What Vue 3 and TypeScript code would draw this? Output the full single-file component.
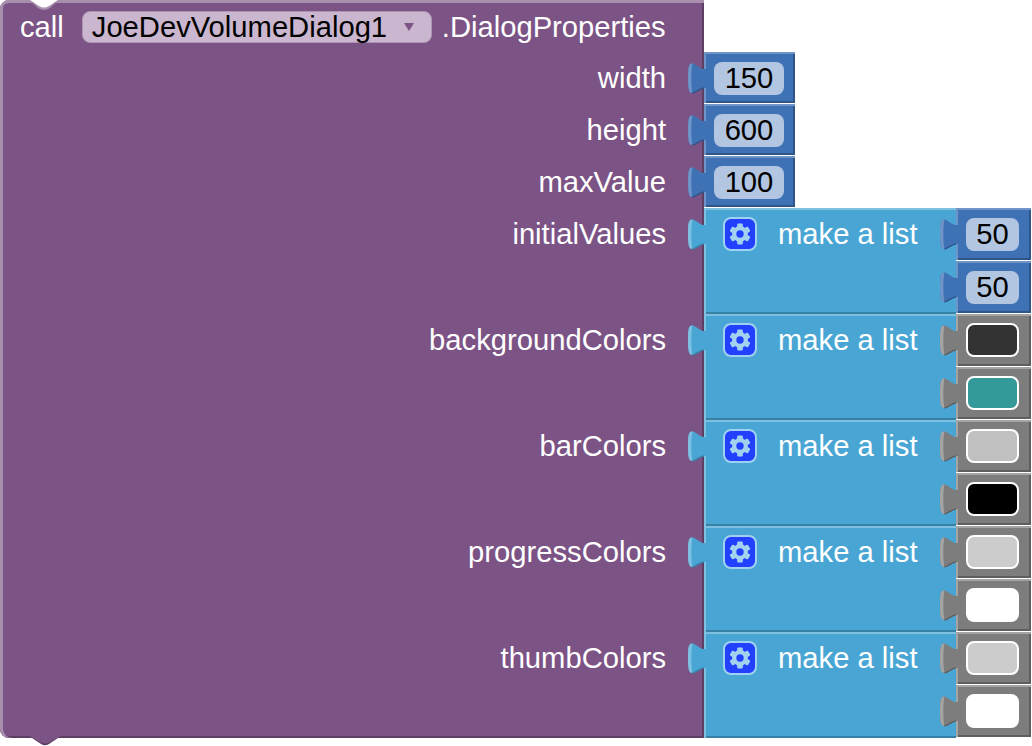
<script setup lang="ts">
type Item = { kind: 'num'; text: string } | { kind: 'color'; color: string; edge: boolean }
interface Row { label: string; kind: 'num' | 'list'; text?: string; items?: Item[] }

const n = (text: string): Item => ({ kind: 'num', text })
const c = (color: string, edge = true): Item => ({ kind: 'color', color, edge })

const rows: Row[] = [
  { label: 'width', kind: 'num', text: '150' },
  { label: 'height', kind: 'num', text: '600' },
  { label: 'maxValue', kind: 'num', text: '100' },
  { label: 'initialValues', kind: 'list', items: [n('50'), n('50')] },
  { label: 'backgroundColors', kind: 'list', items: [c('#333333'), c('#339999')] },
  { label: 'barColors', kind: 'list', items: [c('#c0c0c0'), c('#000000')] },
  { label: 'progressColors', kind: 'list', items: [c('#cccccc'), c('#ffffff', false)] },
  { label: 'thumbColors', kind: 'list', items: [c('#cccccc'), c('#ffffff', false)] },
]
const teeth = [0, 60, 120, 180, 240, 300]
</script>

<template>
  <div class="canvas">
    <svg class="notch" width="32" height="10" viewBox="0 0 32 10">
      <path d="M0 0 L9 8 Q15 12 21 8 L30 0 Z" fill="#a78fad" />
      <path d="M1 0 L10 6 Q15 9 20 6 L29 0 Z" fill="#ffffff" />
    </svg>
    <div class="head">
      <span class="word">call</span>
      <div class="field">
        <span>JoeDevVolumeDialog1</span>
        <i class="caret"></i>
      </div>
      <span class="word">.DialogProperties</span>
    </div>

    <div v-for="(row, r) in rows" :key="row.label" class="row">
      <div class="slot" :class="{ last: r === rows.length - 1 }">{{ row.label }}</div>

      <div v-if="row.kind === 'num'" class="value num wide">
        <svg class="tab" width="20" height="31" viewBox="0 0 20 31">
          <path class="t-fill" d="M20 6 L15 6 C11 5 8 1 4.5 .5 C.8 0 0 4 0 15 C0 26 .8 30 4.5 30 C9 29 12 25 16 25 L20 25 Z" />
          <path class="t-hi" d="M4.5 .5 C.8 0 0 4 0 15 C0 26 .8 30 4.5 30 C3 24 3 6 4.5 .5 Z" />
          <path class="t-lo" d="M4.5 30 C9 29 12 25 16 25" />
        </svg>
        <div class="pill">{{ row.text }}</div>
      </div>

      <div v-else class="list">
        <div class="list-body">
          <svg class="tab" width="20" height="31" viewBox="0 0 20 31">
            <path class="t-fill" d="M20 6 L15 6 C11 5 8 1 4.5 .5 C.8 0 0 4 0 15 C0 26 .8 30 4.5 30 C9 29 12 25 16 25 L20 25 Z" />
            <path class="t-hi" d="M4.5 .5 C.8 0 0 4 0 15 C0 26 .8 30 4.5 30 C3 24 3 6 4.5 .5 Z" />
            <path class="t-lo" d="M4.5 30 C9 29 12 25 16 25" />
          </svg>
          <div class="gear">
            <svg width="24" height="24" viewBox="0 0 24 24">
              <rect v-for="a in teeth" :key="a" x="9.2" y="1.5" width="5.6" height="5" rx="1" fill="#a3d2f0" :transform="`rotate(${a} 12 12)`" />
              <circle cx="12" cy="12" r="5.8" fill="none" stroke="#a3d2f0" stroke-width="4.2" />
            </svg>
          </div>
          <span class="list-text">make a list</span>
        </div>
        <div class="items">
          <div v-for="(item, i) in row.items" :key="i" class="value" :class="item.kind">
            <svg class="tab" width="20" height="31" viewBox="0 0 20 31">
              <path class="t-fill" d="M20 6 L15 6 C11 5 8 1 4.5 .5 C.8 0 0 4 0 15 C0 26 .8 30 4.5 30 C9 29 12 25 16 25 L20 25 Z" />
              <path class="t-hi" d="M4.5 .5 C.8 0 0 4 0 15 C0 26 .8 30 4.5 30 C3 24 3 6 4.5 .5 Z" />
              <path class="t-lo" d="M4.5 30 C9 29 12 25 16 25" />
            </svg>
            <div v-if="item.kind === 'num'" class="pill">{{ item.text }}</div>
            <div
              v-else
              class="swatch"
              :class="{ edged: item.edge }"
              :style="{ backgroundColor: item.color }"
            ></div>
          </div>
        </div>
      </div>
    </div>

    <svg class="foot" width="32" height="10" viewBox="0 0 32 10">
      <path d="M0 0 L12 8 Q16 10.5 20 8 L32 0 Z" fill="#5d3f64" />
      <path d="M0 0 L12 6.5 Q16 8.5 20 6.5 L32 0 Z" fill="#7c5385" />
    </svg>
  </div>
</template>

<style scoped>
.canvas {
  position: relative;
  width: 1032px;
  height: 746px;
  overflow: hidden;
  background: #ffffff;
  font-family: "Liberation Sans", Arial, sans-serif;
  font-size: 29.2px;
  color: #ffffff;
}
.notch {
  position: absolute;
  left: 29px;
  top: 0;
  z-index: 3;
}
.foot {
  position: absolute;
  left: 29px;
  top: 736px;
  z-index: 3;
}
.head {
  display: flex;
  align-items: center;
  gap: 18px;
  box-sizing: border-box;
  width: 704px;
  height: 52px;
  padding: 2px 0 0 20px;
  background: #7c5385;
  border-top-left-radius: 9px;
  box-shadow: inset 0 3px 0 #a78fad, inset 3px 0 0 #a78fad, inset -2px 0 0 #5d3f64;
}
.word {
  line-height: 32px;
  margin-top: -1px;
}
.field {
  display: flex;
  align-items: center;
  box-sizing: border-box;
  flex: 0 0 350px;
  height: 32px;
  margin: 0 -8px 0 0;
  padding: 0 0 0 9px;
  border: 1px solid #ad94b2;
  border-radius: 8px;
  background: #cbb6cf;
  color: #000000;
}
.caret {
  width: 0;
  height: 0;
  margin-left: 17px;
  border-left: 5px solid transparent;
  border-right: 5px solid transparent;
  border-top: 8px solid #7c5385;
}
.row {
  display: flex;
  width: 1032px;
}
.slot {
  box-sizing: border-box;
  flex: 0 0 704px;
  padding-right: 38px;
  background: #7c5385;
  line-height: 52px;
  text-align: right;
  box-shadow: inset 3px 0 0 #a78fad, inset -2px 0 0 #5d3f64;
}
.slot.last {
  border-bottom-left-radius: 9px;
  box-shadow: inset 3px 0 0 #a78fad, inset -2px 0 0 #5d3f64, inset 0 -2px 0 #5d3f64;
}
.num {
  --fill: #3f71b5;
  --hi: #6e94c8;
  --lo: #2f5588;
}
.color {
  --fill: #7d7d7d;
  --hi: #a4a4a4;
  --lo: #5e5e5e;
}
.list {
  --fill: #49a6d4;
  --hi: #7fc0e1;
  --lo: #3780a6;
  display: flex;
  flex: 0 0 327px;
  height: 106px;
}
.value {
  position: relative;
  display: flex;
  align-items: center;
  box-sizing: border-box;
  width: 75px;
  height: 52px;
  margin-bottom: 1px;
  padding-left: 10px;
  background: var(--fill);
  box-shadow: inset 0 2px 0 var(--hi), inset 2px 0 0 var(--hi), inset -2px 0 0 var(--lo), inset 0 -2px 0 var(--lo);
}
.wide {
  width: 91px;
  height: 51px;
}
.tab {
  position: absolute;
  left: -16px;
  top: 11px;
  z-index: 2;
}
.t-fill {
  fill: var(--fill);
}
.t-hi {
  fill: var(--hi);
}
.t-lo {
  fill: none;
  stroke: var(--lo);
  stroke-width: 1.5;
}
.pill {
  box-sizing: border-box;
  width: 53px;
  height: 33px;
  margin-top: 1px;
  border-radius: 8px;
  background: #b2c6e1;
  color: #000000;
  line-height: 33px;
  text-align: center;
}
.wide .pill {
  width: 70px;
}
.swatch {
  box-sizing: border-box;
  width: 53px;
  height: 34px;
  border-radius: 8px;
}
.swatch.edged {
  border: 2px solid #ffffff;
}
.list-body {
  position: relative;
  display: flex;
  align-items: flex-start;
  box-sizing: border-box;
  flex: 0 0 252px;
  padding: 9px 0 0 19px;
  background: var(--fill);
  box-shadow: inset 0 2px 0 var(--hi), inset 2px 0 0 var(--hi), inset 0 -2px 0 var(--lo);
}
.gear {
  display: flex;
  align-items: center;
  justify-content: center;
  box-sizing: border-box;
  width: 34px;
  height: 34px;
  border: 2px solid #9fd0ef;
  border-radius: 8px;
  background: #2140ff;
}
.list-text {
  margin-left: 21px;
  line-height: 34px;
}
.items {
  flex: 0 0 75px;
  display: flex;
  flex-direction: column;
}
</style>

<style>
html,
body {
  margin: 0;
  background: #ffffff;
}
</style>
